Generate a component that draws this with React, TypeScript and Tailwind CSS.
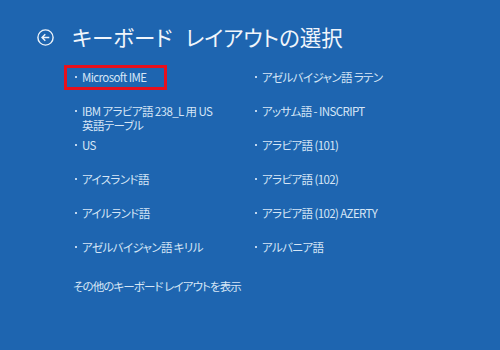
import { ReactNode } from 'react';

const LEFT_ITEMS: ReactNode[] = [
  'Microsoft IME',
  <>
    IBM アラビア語 238_L 用 US
    <br />
    英語テーブル
  </>,
  'US',
  'アイスランド語',
  'アイルランド語',
  'アゼルバイジャン語 キリル',
];

const RIGHT_ITEMS: string[] = [
  'アゼルバイジャン語 ラテン',
  'アッサム語 - INSCRIPT',
  'アラビア語 (101)',
  'アラビア語 (102)',
  'アラビア語 (102) AZERTY',
  'アルバニア語',
];

function BackIcon() {
  return (
    <svg width="17" height="17" viewBox="0 0 17 17" fill="none" stroke="currentColor">
      <circle cx="8.5" cy="8.5" r="7.6" strokeWidth="1.4" />
      <path d="M12.3 8.5H5.2M8.3 5.2L5 8.5l3.3 3.3" strokeWidth="1.4" />
    </svg>
  );
}

function Item({ children, selected }: { children: ReactNode; selected?: boolean }) {
  return (
    <div className="relative flex h-[34px] items-start">
      <span className="mt-[6px] ml-[2px] mr-[5px] h-[2px] w-[2px] shrink-0 bg-[#bcd4ee]" />
      <span className="text-[11.5px] leading-[14px] tracking-[-0.6px] text-[#d6e6f6]">{children}</span>
      {selected && (
        <span className="pointer-events-none absolute left-[-9px] top-[-5px] h-[25px] w-[103px] border-[3px] border-[#e8101c]" />
      )}
    </div>
  );
}

export default function App() {
  return (
    <div
      className="h-[350px] w-[500px] overflow-hidden bg-[#1e65b0] [font-feature-settings:'palt']"
      style={{ fontFamily: '"Noto Sans CJK JP", "Noto Sans", sans-serif' }}
    >
      {/* Header */}
      <div className="flex items-center pl-[37px] pt-[22px]">
        <span className="text-[#eef4fa]">
          <BackIcon />
        </span>
        <h1 className="ml-[18px] text-[21.5px] leading-[30px] text-[#f0f5fb]">
          キーボード<span className="inline-block w-[13px]" />レイアウトの選択
        </h1>
      </div>

      {/* Layout list */}
      <div className="mt-[18px] grid grid-cols-[180px_1fr] pl-[73px]">
        <div className="flex flex-col">
          {LEFT_ITEMS.map((item, i) => (
            <Item key={i} selected={i === 0}>
              {item}
            </Item>
          ))}
        </div>
        <div className="flex flex-col">
          {RIGHT_ITEMS.map((item) => (
            <Item key={item}>{item}</Item>
          ))}
        </div>
      </div>

      <div className="mt-[5px] pl-[73px] text-[11.5px] leading-[14px] tracking-[-0.9px] text-[#d6e6f6]">
        その他のキーボード レイアウトを表示
      </div>
    </div>
  );
}
